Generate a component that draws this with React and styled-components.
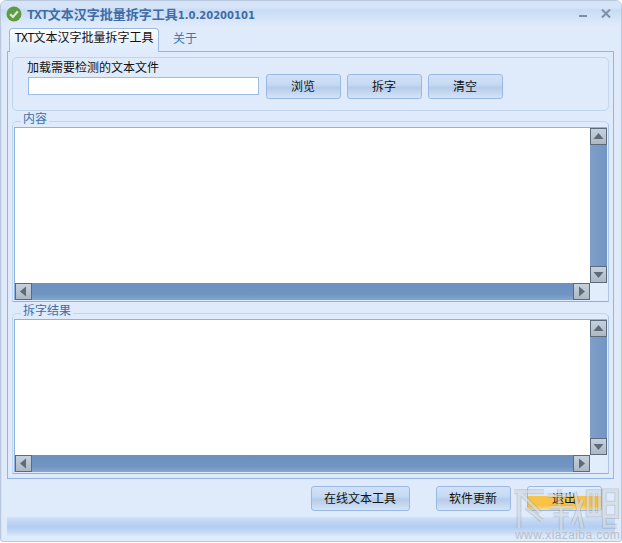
import React from 'react';
import styled, { createGlobalStyle } from 'styled-components';

const CJK = `"Noto Sans CJK SC", "Liberation Sans", sans-serif`;

const GlobalStyle = createGlobalStyle`
  html, body { margin: 0; padding: 0; background: #fff; }
  * { box-sizing: border-box; }
`;

const Window = styled.div`
  position: relative;
  width: 622px;
  height: 542px;
  display: flex;
  flex-direction: column;
  background: #dfebfb;
  border: 1px solid #b9c8dc;
  border-radius: 6px 6px 3px 3px;
  box-shadow: inset 1px 0 0 #d5e2f3, inset 0 1px 0 #e6effb;
  font-family: ${CJK};
`;

const TitleBar = styled.div`
  height: 25px;
  flex: none;
  display: flex;
  align-items: center;
  padding: 0 10px 0 5px;
  border-radius: 5px 5px 0 0;
  background: linear-gradient(#d6e4f8 0, #d6e4f8 7px, #c6dbf4 9px, #d2e3f8 16px, #dfebfb 25px);
`;

const TitleText = styled.div`
  margin-left: 5px;
  font-size: 13px;
  font-weight: 700;
  color: #3f6ca6;
  white-space: nowrap;
`;

const TitleLatin = styled.span`
  font-family: "Liberation Mono", monospace;
  font-size: 13px;
  letter-spacing: -0.9px;
`;

const TitleVersion = styled.span`
  font-family: "DejaVu Sans", sans-serif;
  font-size: 10px;
`;

const WindowControls = styled.div`
  margin-left: auto;
  display: flex;
  align-items: center;
  gap: 14px;
`;

const TabStrip = styled.div`
  height: 25px;
  flex: none;
  display: flex;
  align-items: flex-end;
  padding-left: 8px;
`;

const Tab = styled.div`
  height: ${(p) => (p.$active ? '24px' : '22px')};
  width: ${(p) => (p.$active ? '150px' : 'auto')};
  margin-left: ${(p) => (p.$active ? '0' : '14px')};
  padding-top: ${(p) => (p.$active ? '0' : '1px')};
  text-align: center;
  font-size: 12px;
  line-height: 16px;
  white-space: nowrap;
  color: ${(p) => (p.$active ? '#111' : '#4a74ab')};
  background: ${(p) => (p.$active ? 'linear-gradient(#ffffff, #e6f0fc 60%, #dfebfb)' : 'transparent')};
  border: ${(p) => (p.$active ? '1px solid #9dbbe2' : 'none')};
  border-bottom: none;
  border-radius: 4px 4px 0 0;
  position: relative;
  z-index: 1;
  margin-bottom: ${(p) => (p.$active ? '-1px' : '0')};
`;

const TabLatin = styled.span`
  font-family: "Liberation Mono", monospace;
  font-size: 12px;
  letter-spacing: -0.9px;
`;

const TabPanel = styled.div`
  margin: 0 7px 0 6px;
  height: 428px;
  flex: none;
  display: flex;
  flex-direction: column;
  padding: 5px 4px 0;
  border: 1px solid #93b5e3;
`;

const FileGroup = styled.div`
  height: 54px;
  flex: none;
  padding: 2px 14px 0;
  border: 1px solid #c3d5ec;
  border-radius: 5px;
`;

const FileLabel = styled.div`
  font-size: 12px;
  line-height: 14px;
  color: #111;
`;

const FileRow = styled.div`
  display: flex;
  align-items: center;
`;

const FileInput = styled.div`
  width: 231px;
  height: 18px;
  margin: 0 7px 1px 1px;
  background: #fff;
  border: 1px solid #9cbce4;
`;

const Button = styled.div`
  width: ${(p) => p.$w}px;
  height: 25px;
  flex: none;
  margin-left: ${(p) => p.$ml || 0}px;
  padding: 0 1px 2px 0;
  display: flex;
  align-items: center;
  justify-content: center;
  font-size: 12px;
  color: #111;
  border: 1px solid #9ab9e2;
  border-radius: 3px;
  background: ${(p) =>
    p.$hot
      ? 'linear-gradient(#e3eefc 0, #dae8fb 40%, #f8c34c 41%, #fbc241 80%, #fcdf97 100%)'
      : 'linear-gradient(#d2e2f7 0, #c5daf3 40%, #b7cce9 55%, #c0d4ef 70%, #d4e4f9 100%)'};
`;

const Group = styled.div`
  position: relative;
  height: ${(p) => p.$h}px;
  flex: none;
  margin-top: ${(p) => p.$mt}px;
  padding: 5px 1px 1px;
  border: 1px solid #c3d5ec;
  border-bottom-color: #8db1e2;
  border-right-color: #a9c5ea;
  border-radius: 5px 5px 0 0;
`;

const GroupLegend = styled.div`
  position: absolute;
  top: -11px;
  left: 8px;
  padding: 0 2px;
  background: #dfebfb;
  font-size: 12px;
  line-height: 14px;
  color: #3f6ca6;
`;

const ScrollText = styled.div`
  height: 100%;
  display: grid;
  grid-template-columns: 1fr 17px;
  grid-template-rows: 1fr 17px;
  border-left: 1px solid #8db1e2;
  border-top: 1px solid #8db1e2;
`;

const TextArea = styled.div`
  background: #fff;
`;

const VBar = styled.div`
  display: flex;
  flex-direction: column;
  justify-content: space-between;
  background: linear-gradient(90deg, #7f9fc9, #7195c2);
`;

const HBar = styled.div`
  display: flex;
  justify-content: space-between;
  background: linear-gradient(#6c91bf 0, #7195c2 70%, #87a7d0 100%);
`;

const ArrowButton = styled.div`
  width: 17px;
  height: 17px;
  display: flex;
  align-items: center;
  justify-content: center;
  border: 1px solid #5d6a7c;
  background: linear-gradient(#c6d1de, #aeb8c5);
`;

const Corner = styled.div`
  background: #e2edfb;
`;

const BottomRow = styled.div`
  height: 32px;
  flex: none;
  display: flex;
  align-items: flex-end;
  padding-left: 310px;
`;

const StatusBar = styled.div`
  height: 19px;
  flex: none;
  margin: 6px 6px 0 6px;
  background: linear-gradient(#cfe0f8 0, #bcd3f3 6px, #b3cdf1 10px, #c5daf6 15px, #dce8fb 19px);
`;

const Watermark = styled.div`
  position: absolute;
  left: 508px;
  top: 485px;
  width: 112px;
  height: 56px;
  pointer-events: none;
`;

const WatermarkText = styled.div`
  position: absolute;
  left: 6px;
  top: 43px;
  font-family: "Liberation Sans", sans-serif;
  font-size: 12px;
  line-height: 12px;
  letter-spacing: 0.4px;
  color: #b9bfc6;
  white-space: nowrap;
`;

const Arrow = ({ dir }) => {
  const rot = { up: 0, right: 90, down: 180, left: 270 }[dir];
  return (
    <svg width="11" height="9" viewBox="0 0 11 9" style={{ transform: `rotate(${rot}deg)` }}>
      <path d="M5.5 1 L10.5 7 H0.5 Z" fill="#5f6a78" />
    </svg>
  );
};

const ScrollBox = () => (
  <ScrollText>
    <TextArea />
    <VBar>
      <ArrowButton><Arrow dir="up" /></ArrowButton>
      <ArrowButton><Arrow dir="down" /></ArrowButton>
    </VBar>
    <HBar>
      <ArrowButton><Arrow dir="left" /></ArrowButton>
      <ArrowButton><Arrow dir="right" /></ArrowButton>
    </HBar>
    <Corner />
  </ScrollText>
);

const logoPath = 'M3 6 H34 M8 6 V44 M8 6 L30 28 M15 22 L32 36 M38 10 H62 M50 3 V20 M40 22 H64 M44 30 H60 M52 22 V46 M66 6 L74 44 M74 14 L64 40 M80 6 H92 V30 H80 Z M86 6 V30 M97 5 H110 V32 H97 Z M97 18 H110 M97 32 V42 H110';

const App = () => (
  <>
    <GlobalStyle />
    <Window>
      <TitleBar>
        <svg width="16" height="16" viewBox="0 0 16 16">
          <circle cx="8" cy="8" r="7.5" fill="#5f9a45" />
          <path d="M4.2 8.2 L7 11 L11.8 5.4" fill="none" stroke="#dcebd2" strokeWidth="2.2" />
        </svg>
        <TitleText><TitleLatin>TXT</TitleLatin>文本汉字批量拆字工具<TitleVersion>1.0.20200101</TitleVersion></TitleText>
        <WindowControls>
          <svg width="8" height="8" viewBox="0 0 8 8">
            <rect x="0" y="5" width="8" height="2" fill="#7d8ea6" />
          </svg>
          <svg width="10" height="9" viewBox="0 0 10 9">
            <path d="M1 0.5 L9 8.5 M9 0.5 L1 8.5" stroke="#7d8ea6" strokeWidth="2" />
          </svg>
        </WindowControls>
      </TitleBar>
      <TabStrip>
        <Tab $active><TabLatin>TXT</TabLatin>文本汉字批量拆字工具</Tab>
        <Tab>关于</Tab>
      </TabStrip>
      <TabPanel>
        <FileGroup>
          <FileLabel>加载需要检测的文本文件</FileLabel>
          <FileRow>
            <FileInput />
            <Button $w={75}>浏览</Button>
            <Button $w={75} $ml={6}>拆字</Button>
            <Button $w={75} $ml={6}>清空</Button>
          </FileRow>
        </FileGroup>
        <Group $h={181} $mt={10}>
          <GroupLegend>内容</GroupLegend>
          <ScrollBox />
        </Group>
        <Group $h={161} $mt={11}>
          <GroupLegend>拆字结果</GroupLegend>
          <ScrollBox />
        </Group>
      </TabPanel>
      <BottomRow>
        <Button $w={99}>在线文本工具</Button>
        <Button $w={75} $ml={26}>软件更新</Button>
        <Button $w={75} $ml={16} $hot>退出</Button>
      </BottomRow>
      <StatusBar />
      <Watermark>
        <svg width="112" height="46" viewBox="0 0 112 48" fill="none">
          <path d={logoPath} stroke="#8f99a4" strokeWidth="5" opacity="0.38" />
          <path d={logoPath} stroke="#f2f6fb" strokeWidth="3" opacity="0.45" />
        </svg>
        <WatermarkText>www.xiazaiba.com</WatermarkText>
      </Watermark>
    </Window>
  </>
);

export default App;
